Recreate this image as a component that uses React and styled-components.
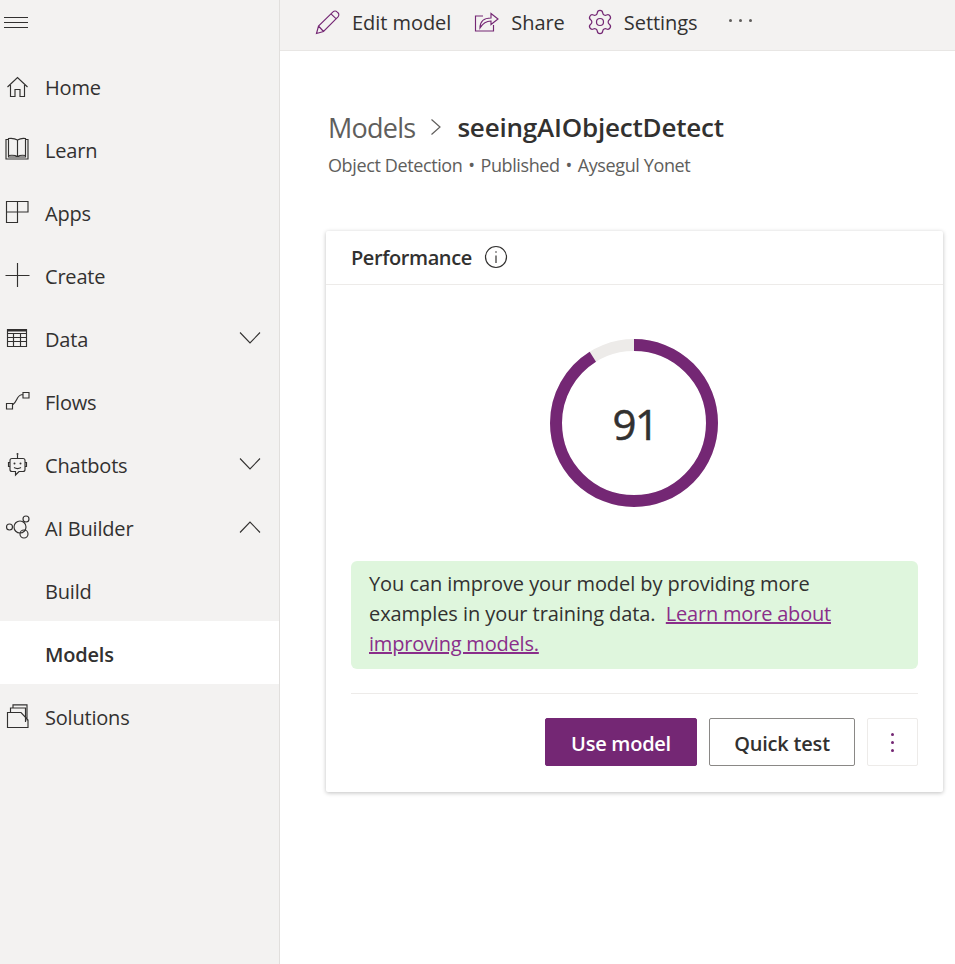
import React from "react";
import styled, { createGlobalStyle } from "styled-components";
import { Settings } from "lucide-react";

const FONT = `"Open Sans", "Noto Sans", "Liberation Sans", sans-serif`;
const PURPLE = "#742774";

const Global = createGlobalStyle`
  html, body { margin: 0; padding: 0; background: #fff; }
  body { font-family: ${FONT}; color: #323130; }
  * { box-sizing: border-box; }
`;

const Page = styled.div`
  display: flex;
  width: 955px;
  height: 964px;
  overflow: hidden;
`;

const Sidebar = styled.nav`
  width: 280px;
  flex: none;
  background: #f3f2f1;
  border-right: 1px solid #e1dfdd;
  display: flex;
  flex-direction: column;
`;

const MenuButton = styled.div`
  height: 54px;
  padding: 16px 0 0 4px;
  display: flex;
  align-items: flex-start;
`;

const NavRow = styled.div`
  height: 63px;
  padding-top: 3px;
  display: flex;
  align-items: center;
  font-size: 20px;
  letter-spacing: -0.2px;
  font-weight: ${(p) => (p.$active ? 600 : 400)};
  background: ${(p) => (p.$active ? "#fff" : "transparent")};
  width: 279px;
  color: #323130;
`;

const NavIcon = styled.span`
  width: 45px;
  height: 25px;
  flex: none;
  display: flex;
  padding-left: 5px;
  margin-top: -2px;
`;

const NavLabel = styled.span`
  flex: 1;
`;

const Chevron = styled.span`
  display: flex;
  margin-right: 18px;
  margin-top: -3px;
`;

const Main = styled.main`
  flex: 1;
  display: flex;
  flex-direction: column;
`;

const CommandBar = styled.div`
  height: 51px;
  background: #f3f2f1;
  border-bottom: 1px solid #e8e6e4;
  display: flex;
  align-items: center;
  padding: 0 0 6px 35px;
  font-size: 20px;
  letter-spacing: -0.05px;
`;

const Command = styled.div`
  display: flex;
  align-items: center;
  gap: 12px;
  margin-right: 23px;
`;

const GearIcon = styled(Settings)`
  margin: 0 -2px 0 -2px;
`;

const Overflow = styled.div`
  display: flex;
  gap: 7px;
  margin: 0 0 4px 8px;
`;

const Dot = styled.i`
  width: 3px;
  height: 3px;
  border-radius: 50%;
  background: #605e5c;
`;

const Content = styled.div`
  padding: 57px 11px 0 46px;
`;

const Crumbs = styled.div`
  display: flex;
  align-items: center;
  height: 38px;
  padding-left: 2px;
`;

const CrumbParent = styled.span`
  font-size: 27px;
  letter-spacing: -0.75px;
  color: #605e5c;
`;

const CrumbSep = styled.span`
  display: flex;
  margin: 0 15px 0 15px;
`;

const CrumbTitle = styled.span`
  font-size: 26px;
  letter-spacing: -0.2px;
  font-weight: 600;
  color: #323130;
`;

const Meta = styled.div`
  margin-top: 6px;
  padding-left: 2px;
  font-size: 18px;
  line-height: 26px;
  letter-spacing: -0.38px;
  color: #605e5c;
`;

const MetaBullet = styled.span`
  padding: 0 1.5px;
`;

const Card = styled.section`
  margin-top: 53px;
  width: 617px;
  height: 561px;
  border-radius: 2px;
  background: #fff;
  box-shadow: 0 1px 4px rgba(0, 0, 0, 0.25);
  display: flex;
  flex-direction: column;
`;

const CardHeader = styled.header`
  height: 54px;
  border-bottom: 1px solid #edebe9;
  display: flex;
  align-items: center;
  gap: 12px;
  padding-left: 25px;
  font-size: 20px;
  font-weight: 600;
  letter-spacing: -0.42px;
`;

const InfoIcon = styled.svg`
  margin-top: -2px;
`;

const CardBody = styled.div`
  flex: 1;
  padding: 0 25px;
  display: flex;
  flex-direction: column;
`;

const Gauge = styled.div`
  position: relative;
  width: 168px;
  height: 168px;
  margin: 54px 0 54px 199px;
`;

const GaugeValue = styled.div`
  position: absolute;
  inset: 0;
  padding-left: 2px;
  display: flex;
  align-items: center;
  justify-content: center;
  font-size: 42px;
  letter-spacing: -1.5px;
  -webkit-text-stroke: 0.5px #323130;
  color: #323130;
`;

const Callout = styled.div`
  height: 108px;
  background: #dff6dd;
  border-radius: 6px;
  padding: 8px 80px 8px 18px;
  font-size: 20px;
  line-height: 30px;
  letter-spacing: -0.07px;
  color: #323130;
`;

const StyledLink = styled.a`
  color: #8a2e8a;
  letter-spacing: -0.2px;
  text-decoration: underline;
  text-decoration-thickness: 1.5px;
`;

const Divider = styled.hr`
  margin: 24px 0 24px;
  border: 0;
  border-top: 1px solid #edebe9;
  width: 100%;
`;

const Actions = styled.div`
  display: flex;
  justify-content: flex-end;
  gap: 12px;
`;

const Button = styled.button`
  height: 48px;
  width: ${(p) => p.$w}px;
  border-radius: 2px;
  font-family: ${FONT};
  font-size: 20px;
  letter-spacing: ${(p) => (p.$primary ? "-0.25px" : "-0.2px")};
  font-weight: 600;
  padding: ${(p) => (p.$quiet ? "0" : "2px 0 0")};
  display: flex;
  align-items: center;
  justify-content: center;
  background: ${(p) => (p.$primary ? PURPLE : "#fff")};
  color: ${(p) => (p.$primary ? "#fff" : "#323130")};
  border: 1px solid ${(p) => (p.$primary ? PURPLE : p.$quiet ? "#edebe9" : "#8a8886")};
  flex-direction: ${(p) => (p.$quiet ? "column" : "row")};
  gap: ${(p) => (p.$quiet ? "5px" : "0")};
`;

const KebabDot = styled.i`
  width: 3px;
  height: 3px;
  border-radius: 50%;
  background: ${PURPLE};
`;

const Ico = ({ w = 25, h = 25, children, color = "#323130", sw = 1.15 }) => (
  <svg width={w} height={h} viewBox={`0 0 ${w} ${h}`} fill="none" stroke={color} strokeWidth={sw}>
    {children}
  </svg>
);

const icons = {
  home: (
    <Ico>
      <path d="M2.500 13 12.500 3.500 22.500 13M5.500 11v11.500h4.500V15.500h5v7h4.500V11" />
    </Ico>
  ),
  learn: (
    <Ico>
      <path d="M3.500 2.500h-2.500v19.500h22V2.500h-2.500" />
      <path d="M3.500 1.500c3.500-.5 6.500 0 9 1.500v16.500c-2.500-1.500-5.500-1.500-9-1ZM20.500 1.500c-3-.5-5.500 0-8 1.500v16.500c2.500-1.500 5-1.500 8-1ZM3.500 18.500v1.500h17v-1.500" />
    </Ico>
  ),
  apps: (
    <Ico>
      <path d="M1.500 1.500h21.500v10.500H12.500v10.500h-11ZM12.500 1.500v10.500M1.500 12h11" />
    </Ico>
  ),
  create: (
    <Ico>
      <path d="M12.500 0v24M.5 12.500h24" />
    </Ico>
  ),
  data: (
    <Ico>
      <path d="M2.500 3.500h19v17h-19ZM2.500 7.500h19M2.500 11.500h19M2.500 15.500h19M8.500 7.500v13M15.500 7.500v13" />
      <path d="M2.500 4.500h19" strokeWidth="2" />
    </Ico>
  ),
  flows: (
    <Ico>
      <path d="M1.500 14.500h6v5.500h-6ZM18 3.500h6V9h-6ZM7.500 16c2.500-1.500 3.500-4 5-7 1.500-2.500 3-3.500 5.500-3.500" />
    </Ico>
  ),
  chat: (
    <Ico>
      <path d="M7 6.500h11a2 2 0 0 1 2 2v9a2 2 0 0 1-2 2h-4l-3.500 3.500v-3.500H7a2 2 0 0 1-2-2v-9a2 2 0 0 1 2-2ZM12.500 6.500V3M5 10.500H3.500v4H5M20 10.500h1.500v4H20M9 15.500c2 1.200 5 1.200 7 0" />
      <circle cx="12.500" cy="2" r="1" fill="#323130" stroke="none" />
      <circle cx="9.500" cy="11.500" r="1" fill="#323130" stroke="none" />
      <circle cx="15.500" cy="11.500" r="1" fill="#323130" stroke="none" />
    </Ico>
  ),
  ai: (
    <Ico>
      <circle cx="4.500" cy="12" r="3" />
      <circle cx="15" cy="12" r="6" />
      <circle cx="21" cy="4" r="3" />
      <circle cx="19" cy="19" r="4" />
    </Ico>
  ),
  solutions: (
    <Ico>
      <path d="M2.500 8.500h13.500l7 7.500v7.500H2.500ZM5.500 8.500V4h15v14M8 4V.8h14v15.700" />
    </Ico>
  ),
};

const ChevronIcon = ({ up }) => (
  <svg width="22" height="12" viewBox="0 0 22 12" fill="none" stroke="#323130" strokeWidth="1.100">
    <path d={up ? "M1 11.500 11 1l10 10.500" : "M1 .5 11 11 21 .5"} />
  </svg>
);

const NAV = [
  ["Home", "home"],
  ["Learn", "learn"],
  ["Apps", "apps"],
  ["Create", "create"],
  ["Data", "data", "down"],
  ["Flows", "flows"],
  ["Chatbots", "chat", "down"],
  ["AI Builder", "ai", "up"],
  ["Build"],
  ["Models", null, null, true],
  ["Solutions", "solutions"],
];

export default function App() {
  const r = 78;
  const c = 2 * Math.PI * r;
  return (
    <Page>
      <Global />
      <Sidebar>
        <MenuButton>
          <svg width="24" height="14" viewBox="0 0 24 14" fill="none" stroke="#323130" strokeWidth="1">
            <path d="M0 1.500h24M0 6.500h24M0 11.500h24" />
          </svg>
        </MenuButton>
        {NAV.map(([label, icon, chev, active]) => (
          <NavRow key={label} $active={active}>
            <NavIcon>{icon && icons[icon]}</NavIcon>
            <NavLabel>{label}</NavLabel>
            {chev && (
              <Chevron>
                <ChevronIcon up={chev === "up"} />
              </Chevron>
            )}
          </NavRow>
        ))}
      </Sidebar>
      <Main>
        <CommandBar>
          <Command>
            <Ico color={PURPLE}>
              <path d="M1.500 23.500 3.500 16 18 1.800c1.200-1.100 3-1.100 4 0l1 1c1.100 1 1.100 2.800 0 4L8.500 21.500ZM3.500 16l5 5.500M16 3.800l5.500 5.300" />
            </Ico>
            Edit model
          </Command>
          <Command>
            <Ico color={PURPLE}>
              <path d="M9 6H1.500v15h18v-6" />
              <path d="M6 18c0-7 4-10 11-10V3.500L24 9l-7 5.500V11c-4 0-8 2-11 7Z" />
            </Ico>
            Share
          </Command>
          <Command>
            <GearIcon size={28} color={PURPLE} strokeWidth={1.05} />
            Settings
          </Command>
          <Overflow>
            <Dot />
            <Dot />
            <Dot />
          </Overflow>
        </CommandBar>
        <Content>
          <Crumbs>
            <CrumbParent>Models</CrumbParent>
            <CrumbSep>
              <svg width="12" height="18" viewBox="0 0 12 18" fill="none" stroke="#605e5c" strokeWidth="1.200">
                <path d="M1.500 1.500 10 9l-8.500 7.500" />
              </svg>
            </CrumbSep>
            <CrumbTitle>seeingAIObjectDetect</CrumbTitle>
          </Crumbs>
          <Meta>
            Object Detection <MetaBullet>•</MetaBullet> Published <MetaBullet>•</MetaBullet> Aysegul Yonet
          </Meta>
          <Card>
            <CardHeader>
              Performance
              <InfoIcon width="24" height="24" viewBox="0 0 24 24" fill="none" stroke="#323130" strokeWidth="1.200">
                <circle cx="12" cy="12" r="10.500" />
                <path d="M12 10.500V18" />
                <circle cx="12" cy="7" r=".8" fill="#323130" stroke="none" />
              </InfoIcon>
            </CardHeader>
            <CardBody>
              <Gauge>
                <svg width="168" height="168" viewBox="0 0 168 168">
                  <circle cx="84" cy="84" r={r} fill="none" stroke="#edebe9" strokeWidth="12" />
                  <circle
                    cx="84"
                    cy="84"
                    r={r}
                    fill="none"
                    stroke={PURPLE}
                    strokeWidth="12"
                    strokeDasharray={`${c * 0.91} ${c}`}
                    transform="rotate(-90 84 84)"
                  />
                </svg>
                <GaugeValue>91</GaugeValue>
              </Gauge>
              <Callout>
                You can improve your model by providing more examples in your training data.&nbsp;{" "}
                <StyledLink>Learn more about improving models.</StyledLink>
              </Callout>
              <Divider />
              <Actions>
                <Button $primary $w={152}>Use model</Button>
                <Button $w={146}>Quick test</Button>
                <Button $quiet $w={51}>
                  <KebabDot />
                  <KebabDot />
                  <KebabDot />
                </Button>
              </Actions>
            </CardBody>
          </Card>
        </Content>
      </Main>
    </Page>
  );
}
